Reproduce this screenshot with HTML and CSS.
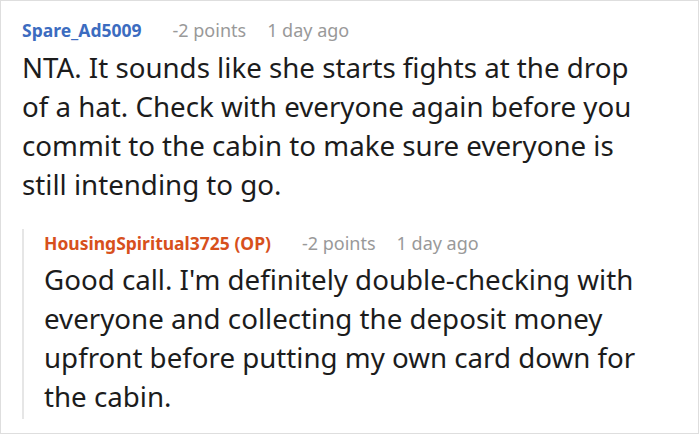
FILE: index.html
```html
<!DOCTYPE html>
<html>
<head>
<meta charset="utf-8">
<link rel="stylesheet" href="styles.css">
</head>
<body>
<div class="frame">
  <div class="comment">
    <div class="meta">
      <span class="user">Spare_Ad5009</span>
      <span class="info">-2 points</span>
      <span class="info">1 day ago</span>
    </div>
    <div class="text">NTA. It sounds like she starts fights at the drop of a hat. Check with everyone again before you commit to the cabin to make sure everyone is still intending to go.</div>
  </div>
  <div class="reply">
    <div class="meta reply-meta">
      <span class="user op">HousingSpiritual3725 (OP)</span>
      <span class="info">-2 points</span>
      <span class="info">1 day ago</span>
    </div>
    <div class="text reply-text">Good call. I'm definitely double-checking with everyone and collecting the deposit money upfront before putting my own card down for the cabin.</div>
  </div>
</div>
</body>
</html>
```
FILE: styles.css
```css
html, body {
  margin: 0;
  background: #fff;
}
.frame {
  box-sizing: border-box;
  width: 699px;
  height: 434px;
  border: 1px solid #dedede;
  padding: 15px 40px 0 21px;
  font-family: "Noto Sans", "Open Sans", sans-serif;
}
.meta {
  display: flex;
  gap: 21px;
  font-size: 17.5px;
  line-height: 28px;
  height: 28px;
  white-space: nowrap;
}
.user {
  font-weight: 700;
  color: #3c6cc0;
  margin-right: 10px;
}
.user.op {
  color: #d7501c;
}
.info {
  color: #999;
  font-size: 18px;
}
.text {
  margin-top: 4px;
  font-size: 27.7px;
  line-height: 39px;
  color: #1c1c1c;
}
.reply {
  margin-top: 38px;
  border-left: 2px solid #e6e6e6;
  padding: 0 0 3px 20px;
}
.reply-meta {
  margin-top: -13px;
}
.reply-text {
  margin-top: 3px;
}
```
